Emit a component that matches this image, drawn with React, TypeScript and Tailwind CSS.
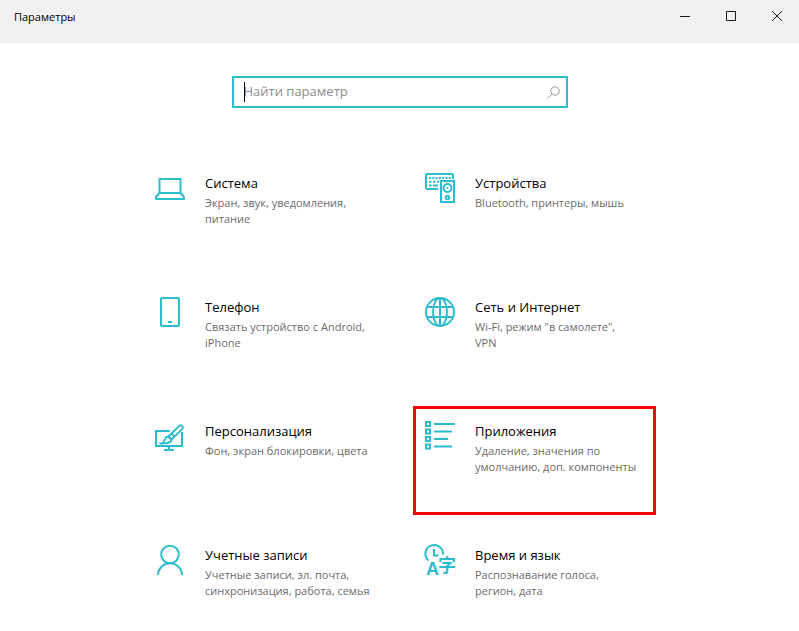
import { useState } from 'react';
import type { ReactNode } from 'react';

type Category = {
  id: string;
  title: string;
  description: string;
  icon: ReactNode;
  highlighted?: boolean;
};

function Icon({ children }: { children: ReactNode }) {
  return (
    <svg
      viewBox="0 0 30 30"
      fill="none"
      stroke="currentColor"
      strokeWidth="2"
      className="size-[30px] shrink-0 overflow-visible text-[#2dbccd]"
      aria-hidden="true"
    >
      {children}
    </svg>
  );
}

const categories: Category[] = [
  {
    id: 'system',
    title: 'Система',
    description: 'Экран, звук, уведомления,\nпитание',
    icon: (
      <Icon>
        <path d="M4.5 20V6h21v14" />
        <path d="M4.5 20h21L29 24v2H1v-2z" strokeLinejoin="round" />
      </Icon>
    ),
  },
  {
    id: 'devices',
    title: 'Устройства',
    description: 'Bluetooth, принтеры, мышь',
    icon: (
      <Icon>
        <path d="M13 16H2.500Q1 16 1 14.500V2.500Q1 1 2.500 1h24Q28 1 28 2.500V6" />
        <path d="M4 5h22" strokeDasharray="2 1.300" />
        <path d="M4 8.800h2.500M8 8.800h2.500M12 8.800h2M4 12.500h2.500M8 12.500h5" />
        <rect x="16" y="8" width="13" height="21" />
        <circle cx="22.500" cy="15" r="4" />
        <circle cx="22.500" cy="15" r="1" fill="currentColor" stroke="none" />
        <circle cx="22.500" cy="24.500" r="1.800" />
      </Icon>
    ),
  },
  {
    id: 'phone',
    title: 'Телефон',
    description: 'Связать устройство с Android,\niPhone',
    icon: (
      <Icon>
        <rect x="6" y="1" width="18" height="28" rx="1" />
        <path d="M13 25h4" />
      </Icon>
    ),
  },
  {
    id: 'network',
    title: 'Сеть и Интернет',
    description: 'Wi-Fi, режим "в самолете",\nVPN',
    icon: (
      <Icon>
        <circle cx="15" cy="15" r="14" />
        <ellipse cx="15" cy="15" rx="7" ry="14" />
        <path d="M15 1v28M2 10h26M2 20h26" />
      </Icon>
    ),
  },
  {
    id: 'personalization',
    title: 'Персонализация',
    description: 'Фон, экран блокировки, цвета',
    icon: (
      <Icon>
        <path d="M15 10H1v15h26V11" />
        <path d="M14 25v4M9 29h10" />
        <path
          d="M13.500 15.500 24 5a2.200 2.200 0 0 1 3.200 3.200L16.500 18.500zM16.500 12.500l3.200 3.200"
          strokeWidth="1.800"
          strokeLinejoin="round"
        />
        <path
          d="M16.500 18.500c0 3-3 4-11.500 4 4.500-.5 4-2 5-4.500.8-2 2-2.500 3.500-2.500z"
          strokeWidth="1.800"
          strokeLinejoin="round"
        />
      </Icon>
    ),
  },
  {
    id: 'apps',
    title: 'Приложения',
    description: 'Удаление, значения по\nумолчанию, доп. компоненты',
    highlighted: true,
    icon: (
      <Icon>
        <path d="M1 1h4v4H1zM1 8.500h4v4H1zM1 16h4v4H1zM1 23.500h4v4H1z" />
        <path d="M9 3h21M9 10.500h18M9 18h14M9 25.500h18" />
      </Icon>
    ),
  },
  {
    id: 'accounts',
    title: 'Учетные записи',
    description: 'Учетные записи, эл. почта,\nсинхронизация, работа, семья',
    icon: (
      <Icon>
        <circle cx="15" cy="9.500" r="8.800" />
        <path d="M3 30a12 11.700 0 0 1 24 0" />
      </Icon>
    ),
  },
  {
    id: 'time',
    title: 'Время и язык',
    description: 'Распознавание голоса,\nрегион, дата',
    icon: (
      <Icon>
        <path d="M3.500 15.500A8.800 8.800 0 1 1 18 9.500" />
        <path d="M9 4v6.500h4.500" />
        <text
          x="1"
          y="30"
          fill="currentColor"
          stroke="none"
          className="font-['Liberation_Sans',sans-serif] text-[18px] font-bold"
        >
          A
        </text>
        <text
          x="13"
          y="27"
          fill="currentColor"
          stroke="none"
          className="font-['Noto_Sans_CJK_SC',sans-serif] text-[18px] font-bold"
        >
          字
        </text>
      </Icon>
    ),
  },
];

function TitleBar() {
  return (
    <header className="flex h-11 shrink-0 items-start justify-between bg-[#f1f1f1]">
      <h1 className="pl-3.5 text-[11px] leading-[34px] text-black">Параметры</h1>
      <div className="flex text-[#1a1a1a]">
        <button type="button" aria-label="Свернуть" className="flex h-8 w-[46px] items-center justify-center pl-0.5">
          <svg viewBox="0 0 10 10" className="size-2.5" stroke="currentColor" fill="none">
            <path d="M0 5.500h10" />
          </svg>
        </button>
        <button type="button" aria-label="Развернуть" className="flex h-8 w-[46px] items-center justify-center pl-0.5">
          <svg viewBox="0 0 10 10" className="size-2.5" stroke="currentColor" fill="none">
            <path d="M.5.5h9v9h-9z" />
          </svg>
        </button>
        <button type="button" aria-label="Закрыть" className="flex h-8 w-[46px] items-center justify-center pl-0.5">
          <svg viewBox="0 0 10 10" className="size-2.5" stroke="currentColor" fill="none">
            <path d="m0 0 10 10M10 0 0 10" />
          </svg>
        </button>
      </div>
    </header>
  );
}

function SearchBox() {
  const [query, setQuery] = useState('');

  return (
    <div className="relative mx-auto flex h-8 w-full max-w-[336px] items-center border-2 border-[#2dbccd] bg-white">
      <input
        type="text"
        aria-label="Найти параметр"
        placeholder="Найти параметр"
        value={query}
        onChange={(e) => setQuery(e.target.value)}
        className="h-full min-w-0 flex-1 pb-0.5 pl-2.5 text-[13px] text-black outline-none placeholder:text-[#8c8c8c]"
      />
      {query === '' && <span className="absolute top-1 left-2.5 h-5 w-px bg-black" />}
      <button type="button" aria-label="Поиск" className="mr-1.5 text-[#999999]">
        <svg viewBox="0 0 13 13" className="size-[13px]" stroke="currentColor" fill="none">
          <circle cx="8" cy="5" r="4.200" />
          <path d="M5 8 .5 12.500" />
        </svg>
      </button>
    </div>
  );
}

function CategoryTile({ title, description, icon, highlighted }: Category) {
  return (
    <a
      href="#"
      className={`flex min-h-[109px] items-start gap-5 border-3 px-[9px] py-3 ${
        highlighted ? 'border-[#fe0000]' : 'border-transparent'
      }`}
    >
      {icon}
      <div className="min-w-0">
        <h2 className="text-[13px] leading-5 text-black">{title}</h2>
        <p className="mt-0.5 text-[11px] leading-4 whitespace-pre-line text-[#6b6b6b]">{description}</p>
      </div>
    </a>
  );
}

export default function App() {
  return (
    <div className="flex h-screen flex-col overflow-hidden bg-white font-['Open_Sans','Noto_Sans',sans-serif]">
      <TitleBar />
      <main className="px-4 pt-8">
        <SearchBox />
        <nav className="mx-auto mt-[50px] grid max-w-[513px] grid-cols-2 gap-x-[27px] gap-y-[15px]">
          {categories.map((category) => (
            <CategoryTile key={category.id} {...category} />
          ))}
        </nav>
      </main>
    </div>
  );
}
